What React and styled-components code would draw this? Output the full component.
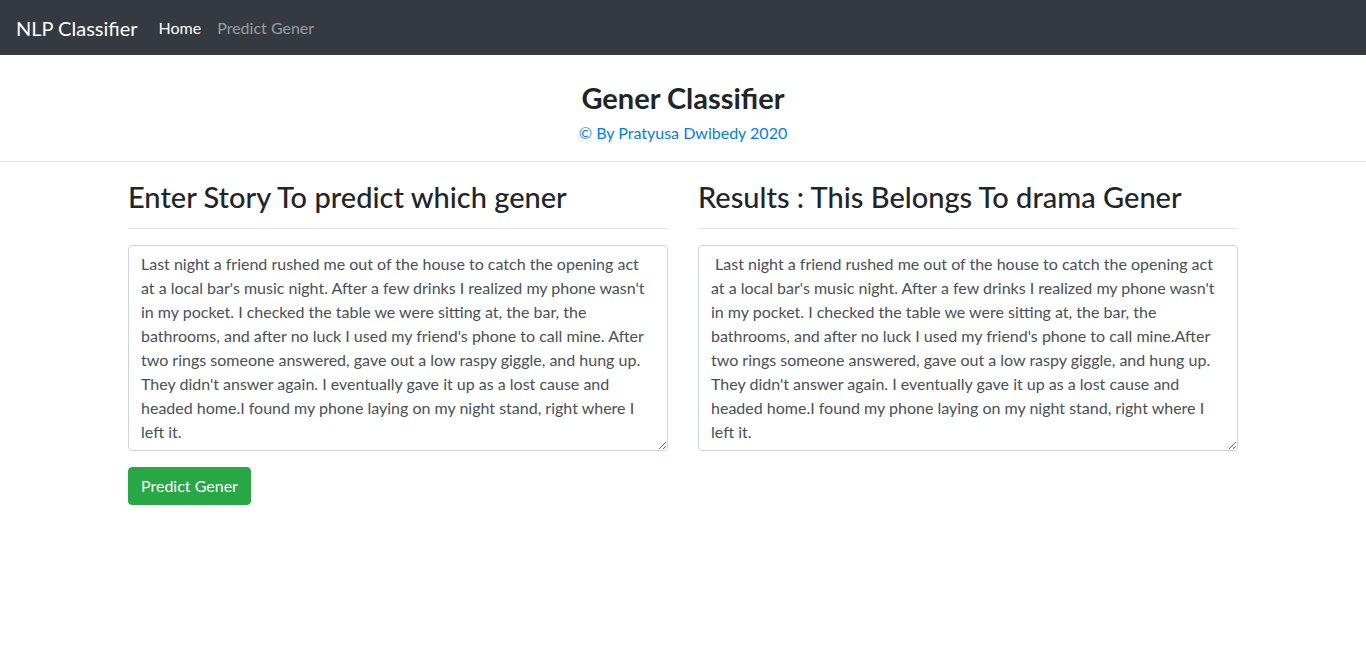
import React from "react";
import styled, { createGlobalStyle } from "styled-components";

const GlobalStyle = createGlobalStyle`
  * { box-sizing: border-box; }
  body {
    margin: 0;
    font-family: "Segoe UI", Lato, "Noto Sans", sans-serif;
    font-size: 16px;
    line-height: 1.5;
    color: #212529;
    background: #fff;
  }
`;

const Navbar = styled.nav`
  display: flex;
  align-items: center;
  height: 55px;
  padding: 0 16px;
  background-color: #343a40;
`;
const Brand = styled.a`
  font-size: 20px;
  color: #fff;
  margin-right: 21px;
  text-decoration: none;
`;
const NavLinks = styled.div`
  display: flex;
  gap: 16px;
`;
const NavLink = styled.a`
  color: ${(p) => (p.active ? "#fff" : "rgba(255,255,255,.5)")};
  text-decoration: none;
`;

const Header = styled.header`
  text-align: center;
  padding-top: 26px;
`;
const Title = styled.h3`
  margin: 0;
  font-size: 29px;
  font-weight: 700;
  line-height: 1.2;
`;
const Credit = styled.div`
  color: #007bff;
  margin-top: 5px;
`;
const Rule = styled.hr`
  border: 0;
  border-top: 1px solid rgba(0, 0, 0, 0.1);
  margin: ${(p) => p.margin || "16px 0"};
`;

const Container = styled.main`
  width: 1140px;
  margin: 0 auto;
  padding: 0 15px;
  display: grid;
  grid-template-columns: 1fr 1fr;
  column-gap: 30px;
`;
const Column = styled.section`
  display: flex;
  flex-direction: column;
`;
const Heading = styled.h2`
  margin: 2px 0 0;
  font-size: 29px;
  font-weight: 500;
  line-height: 1.2;
  white-space: nowrap;
`;
const TextArea = styled.textarea`
  display: block;
  width: 100%;
  padding: 6px 12px;
  font: inherit;
  color: #495057;
  line-height: 1.5;
  border: 1px solid #ced4da;
  border-radius: 4px;
  resize: vertical;
`;
const Button = styled.button`
  align-self: flex-start;
  margin-top: 16px;
  padding: 6px 12px;
  font: inherit;
  color: #fff;
  background-color: #28a745;
  border: 1px solid #28a745;
  border-radius: 4px;
  line-height: 1.5;
`;

const story =
  "Last night a friend rushed me out of the house to catch the opening act at a local bar's music night. After a few drinks I realized my phone wasn't in my pocket. I checked the table we were sitting at, the bar, the bathrooms, and after no luck I used my friend's phone to call mine. After two rings someone answered, gave out a low raspy giggle, and hung up. They didn't answer again. I eventually gave it up as a lost cause and headed home.I found my phone laying on my night stand, right where I left it.";

const result =
  " Last night a friend rushed me out of the house to catch the opening act at a local bar's music night. After a few drinks I realized my phone wasn't in my pocket. I checked the table we were sitting at, the bar, the bathrooms, and after no luck I used my friend's phone to call mine.After two rings someone answered, gave out a low raspy giggle, and hung up. They didn't answer again. I eventually gave it up as a lost cause and headed home.I found my phone laying on my night stand, right where I left it.";

const App = () => {
  return (
    <>
      <GlobalStyle />
      <Navbar>
        <Brand href="#">NLP Classifier</Brand>
        <NavLinks>
          <NavLink href="#" active>
            Home
          </NavLink>
          <NavLink href="#">Predict Gener</NavLink>
        </NavLinks>
      </Navbar>
      <Header>
        <Title>Gener Classifier</Title>
        <Credit>© By Pratyusa Dwibedy 2020</Credit>
      </Header>
      <Rule />
      <Container>
        <Column>
          <Heading>Enter Story To predict which gener</Heading>
          <Rule margin="13px 0 16px" />
          <TextArea rows={8} defaultValue={story} spellCheck={false} />
          <Button>Predict Gener</Button>
        </Column>
        <Column>
          <Heading>Results : This Belongs To drama Gener</Heading>
          <Rule margin="13px 0 16px" />
          <TextArea rows={8} defaultValue={result} spellCheck={false} />
        </Column>
      </Container>
    </>
  );
};

export default App;
